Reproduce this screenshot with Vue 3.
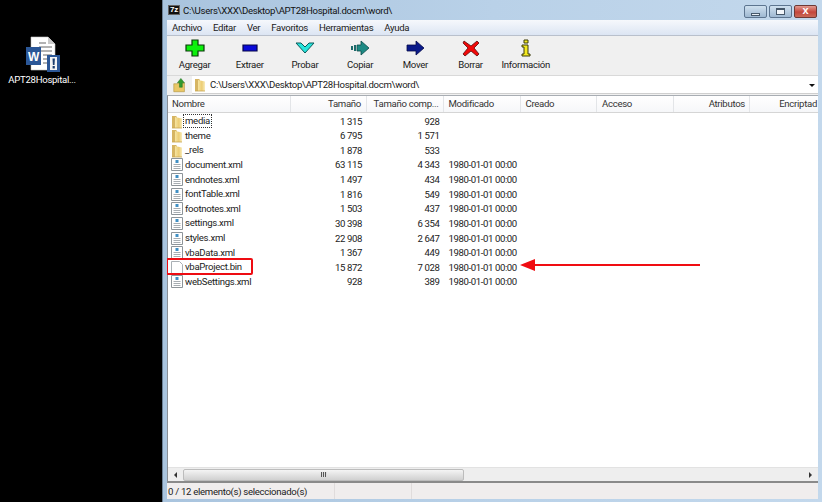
<template>
  <div class="screen">
    <!-- Desktop -->
    <div class="desktop">
      <div class="desk-icon">
        <svg width="36" height="36" viewBox="0 0 36 36">
          <path d="M6 1h17l7 7v26H6z" fill="#fff" stroke="#c4c4c4" stroke-width="0.6"/>
          <path d="M23 1l7 7h-7z" fill="#c9c9c9"/>
          <path d="M14 7h7M14 11h13M14 15h13M18 19h9M18 23h6M18 27h6" stroke="#9a9a9a" stroke-width="1.4"/>
          <rect x="1" y="11" width="15" height="18" fill="#2b5797"/>
          <text x="3" y="24.5" class="w-letter">W</text>
          <path d="M22 19h13v17H22z" fill="#2b5797"/>
          <path d="M25 21h7v13h-7z" fill="#f4f4f4"/>
          <path d="M27.5 22.5h2.4l-.4 6.5h-1.6zM27.6 30h2.2v2.4h-2.2z" fill="#1b3d6e"/>
        </svg>
        <span class="desk-label">APT28Hospital...</span>
      </div>
    </div>

    <!-- 7-Zip window -->
    <div class="window">
      <div class="titlebar">
        <span class="app-icon">7z</span>
        <span class="title">C:\Users\XXX\Desktop\APT28Hospital.docm\word\</span>
        <div class="win-btns">
          <span class="win-btn"><i class="min-glyph"></i></span>
          <span class="win-btn"><i class="max-glyph"></i></span>
          <span class="win-btn close"><b>x</b></span>
        </div>
      </div>

      <div class="client">
        <div class="menu">
          <span v-for="m in menus" :key="m">{{ m }}</span>
        </div>

        <div class="toolbar">
          <div v-for="t in tools" :key="t.label" class="tool">
            <svg width="20" height="18" viewBox="0 0 20 18" v-html="t.icon"></svg>
            <span>{{ t.label }}</span>
          </div>
        </div>

        <div class="addressbar">
          <div class="up-btn">
            <svg width="16" height="17" viewBox="0 0 18 18">
              <path d="M2 7h4l1-1h7v10H2z" fill="#e9c766" stroke="#a98a35" stroke-width="0.6"/>
              <path d="M10 1l4 5h-2.4v5H8.4V6H6z" fill="#2f9a2f" stroke="#1c6a1c" stroke-width="0.5"/>
            </svg>
          </div>
          <div class="address">
            <svg class="folder" width="12" height="15" viewBox="0 0 12 15">
              <use href="#folder-shape"/>
            </svg>
            <span>C:\Users\XXX\Desktop\APT28Hospital.docm\word\</span>
            <i class="combo-arrow"></i>
          </div>
        </div>

        <div class="list">
          <div class="head">
            <span v-for="c in columns" :key="c.label" class="hcell" :class="c.cls">{{ c.label }}</span>
          </div>

          <div class="rows">
            <div v-for="(f, i) in files" :key="f.name" class="row">
              <span class="cell c-name">
                <svg v-if="f.type === 'dir'" class="file-icon" width="12" height="15" viewBox="0 0 12 15">
                  <use href="#folder-shape"/>
                </svg>
                <svg v-else-if="f.type === 'xml'" class="file-icon" width="12" height="15" viewBox="0 0 12 15">
                  <path d="M.5 1.5h11v12H.5z" fill="#fff" stroke="#8d9499"/>
                  <path d="M2.5 7.5h7M2.5 9.5h7M2.5 11.5h7" stroke="#a7adb2"/>
                  <path d="M4.5 3h3v3h-3z" fill="#3f8fc4"/>
                </svg>
                <svg v-else class="file-icon" width="12" height="15" viewBox="0 0 12 15">
                  <path d="M.5 1.5h8l3 3v9H.5z" fill="#fff" stroke="#aab0b5"/>
                </svg>
                <span class="fname" :class="{ focused: i === 0 }">{{ f.name }}</span>
              </span>
              <span class="cell c-size num">{{ f.size }}</span>
              <span class="cell c-comp num">{{ f.comp }}</span>
              <span class="cell c-date num">{{ f.date }}</span>
              <template v-if="f.name === 'vbaProject.bin'">
                <i class="mark-box"></i>
                <svg class="mark-arrow" width="182" height="14" viewBox="0 0 182 14">
                  <path d="M181 6H16V1L1 7l15 6V8h165z" fill="#f00d12"/>
                </svg>
              </template>
            </div>
          </div>

          <div class="hscroll">
            <i class="arr left"></i>
            <div class="thumb"><em></em></div>
            <i class="arr right"></i>
          </div>
        </div>

        <div class="status">
          <span class="s1">0 / 12 elemento(s) seleccionado(s)</span>
          <span class="s2"></span>
          <span class="s3"></span>
        </div>
      </div>
    </div>

    <!-- shared folder shape -->
    <svg width="0" height="0" class="defs">
      <defs>
        <linearGradient id="fold" x1="0" y1="0" x2="1" y2="0">
          <stop offset="0" stop-color="#f7e5a2"/>
          <stop offset="0.55" stop-color="#eccd74"/>
          <stop offset="1" stop-color="#f8ecbc"/>
        </linearGradient>
        <g id="folder-shape">
          <path d="M1 2h4l1 1v11H1z" fill="#d6b563"/>
          <path d="M4 3l7 1.5V14H4z" fill="url(#fold)"/>
          <path d="M1 14h10" stroke="#c6a552" stroke-width="0.8"/>
        </g>
      </defs>
    </svg>
  </div>
</template>

<script setup>
const menus = ['Archivo', 'Editar', 'Ver', 'Favoritos', 'Herramientas', 'Ayuda']

const tools = [
  { label: 'Agregar', icon: '<path d="M7 1h6v5h6v6h-6v5H7v-5H1V6h6z" fill="#0cf00c" stroke="#0a3a0a" stroke-width="1.2"/>' },
  { label: 'Extraer', icon: '<path d="M3 6h14v6H3z" fill="#0a0ad8" stroke="#06064a" stroke-width="1.2"/>' },
  { label: 'Probar', icon: '<path d="M1 4h5l4 4 4-4h5l-9 10z" fill="#28e4dc" stroke="#0b5a5a" stroke-width="1"/>' },
  { label: 'Copiar', icon: '<path d="M1 7h2v4H1zM4 6h2v6H4z" fill="#1c6a6a"/><path d="M7 6h4V2l8 7-8 7v-4H7z" fill="#1d8a84" stroke="#0b4a4a" stroke-width="0.8"/>' },
  { label: 'Mover', icon: '<path d="M2 6h9V2l8 7-8 7v-4H2z" fill="#0a1a8a" stroke="#050a4a" stroke-width="0.8"/>' },
  { label: 'Borrar', icon: '<path d="M3 2l7 5 6-5 2 2-5 5 5 6-2 2-6-5-6 5-2-2 5-6-5-5z" fill="#f00808" stroke="#5a0a0a" stroke-width="0.8"/>' },
  { label: 'Información', icon: '<path d="M8 1h4v3H8zM6 6h6v9h2v2H6v-2h2V8H6z" fill="#f4ea20" stroke="#3a3a08" stroke-width="1"/>' },
]

const columns = [
  { label: 'Nombre', cls: 'c-name' },
  { label: 'Tamaño', cls: 'c-size' },
  { label: 'Tamaño comp...', cls: 'c-comp' },
  { label: 'Modificado', cls: 'c-date' },
  { label: 'Creado', cls: 'c-std' },
  { label: 'Acceso', cls: 'c-std' },
  { label: 'Atributos', cls: 'c-attr' },
  { label: 'Encriptad', cls: 'c-enc' },
]

const stamp = '1980-01-01 00:00'
const files = [
  { name: 'media', type: 'dir', size: '1 315', comp: '928', date: '' },
  { name: 'theme', type: 'dir', size: '6 795', comp: '1 571', date: '' },
  { name: '_rels', type: 'dir', size: '1 878', comp: '533', date: '' },
  { name: 'document.xml', type: 'xml', size: '63 115', comp: '4 343', date: stamp },
  { name: 'endnotes.xml', type: 'xml', size: '1 497', comp: '434', date: stamp },
  { name: 'fontTable.xml', type: 'xml', size: '1 816', comp: '549', date: stamp },
  { name: 'footnotes.xml', type: 'xml', size: '1 503', comp: '437', date: stamp },
  { name: 'settings.xml', type: 'xml', size: '30 398', comp: '6 354', date: stamp },
  { name: 'styles.xml', type: 'xml', size: '22 908', comp: '2 647', date: stamp },
  { name: 'vbaData.xml', type: 'xml', size: '1 367', comp: '449', date: stamp },
  { name: 'vbaProject.bin', type: 'bin', size: '15 872', comp: '7 028', date: stamp },
  { name: 'webSettings.xml', type: 'xml', size: '928', comp: '389', date: stamp },
]
</script>

<style>
html, body { margin: 0; background: #000; }
</style>

<style scoped>
.screen {
  width: 822px;
  height: 502px;
  display: flex;
  overflow: hidden;
  background: #000;
  font-family: Roboto, "Liberation Sans", sans-serif;
  font-size: 9.6px;
  letter-spacing: -0.3px;
  color: #1a1a1a;
}
.defs { position: absolute; }

.desktop { width: 162px; flex-shrink: 0; padding: 36px 0 0 8px; box-sizing: border-box; }
.desk-icon { width: 68px; display: flex; flex-direction: column; align-items: center; gap: 2px; }
.desk-icon svg { margin-left: 2px; }
.desk-label { color: #fff; white-space: nowrap; }
.w-letter { font: bold 12px "Liberation Sans", sans-serif; fill: #fff; }

.window {
  width: 660px;
  min-width: 0;
  box-sizing: border-box;
  display: flex;
  flex-direction: column;
  background: linear-gradient(90deg, #a9c4de, #b9d1e8 50%, #c3d8ec);
  padding: 0 4px 3px 4px;
  border-left: 1px solid #6c8196;
}
.titlebar { height: 20px; display: flex; align-items: center; flex-shrink: 0; }
.app-icon {
  width: 12px; height: 10px; box-sizing: border-box; background: #111; color: #fff; border: 1px solid #666;
  font: bold 8px/8px "Liberation Sans", sans-serif; text-align: center; margin: 0 3px 0 1px;
}
.title { color: #111; }
.win-btns { margin-left: auto; display: flex; gap: 2px; margin-top: 2px; margin-right: 1px; align-self: flex-start; padding-top: 3px; }
.win-btn {
  width: 23px; height: 13px; box-sizing: border-box; border: 1px solid #5d7590; border-radius: 2px;
  background: linear-gradient(#cfe0ef, #9fb9d2); display: flex; align-items: center; justify-content: center;
}
.win-btn.close { background: linear-gradient(#e29a90, #c4473c 55%, #c96a58); border-color: #6e3a36; }
.win-btn.close b { color: #fff; font: bold 11px/11px "Liberation Sans", sans-serif; margin-top: -2px; }
.min-glyph { width: 9px; height: 3px; margin-top: 5px; background: #e8eef4; border: 1px solid #46586a; box-sizing: border-box; }
.max-glyph { width: 9px; height: 7px; border: 1px solid #46586a; border-top-width: 2px; box-sizing: border-box; background: #f2f6fa; }

.client { flex: 1; min-width: 0; display: flex; flex-direction: column; min-height: 0; background: #f0f0f0; overflow: hidden; }
.menu {
  height: 15px; flex-shrink: 0; display: flex; gap: 11px; padding: 0 0 0 5px; align-items: center;
  background: linear-gradient(#f6f8fc, #dce5f3);
  border-bottom: 1px solid #b9c0cc;
}
.toolbar { height: 39px; flex-shrink: 0; display: flex; background: #f0f0f0; }
.tool { width: 55.2px; display: flex; flex-direction: column; align-items: center; padding-top: 3px; gap: 1px; }
.tool span { line-height: 13px; white-space: nowrap; }

.addressbar { height: 18px; flex-shrink: 0; display: flex; border-top: 1px solid #d9d9d9; background: #f0f0f0; }
.up-btn { width: 25px; display: flex; align-items: center; justify-content: center; }
.address {
  flex: 1; background: #fff; display: flex; align-items: center; gap: 4px; padding-left: 2px;
  border-bottom: 1px solid #cfcfcf; position: relative;
}
.combo-arrow {
  position: absolute; right: 3px; top: 8px; width: 0; height: 0;
  border-left: 3px solid transparent; border-right: 3px solid transparent; border-top: 3px solid #111;
}

.list {
  flex: 1; min-height: 0; display: flex; flex-direction: column; margin-top: 1px;
  background: #fff; border-left: 1px solid #8a8f96; border-top: 1px solid #a8adb3; border-bottom: 2px solid #8a8a8a;
}
.head {
  height: 16px; flex-shrink: 0; display: flex; background: linear-gradient(#fff, #f6f7f9);
  border-bottom: 1px solid #d5d5d5; overflow: hidden; color: #333;
}
.hcell { border-right: 1px solid #e3e5e8; box-sizing: border-box; line-height: 16px; white-space: nowrap; }
.c-name { width: 122.5px; padding-left: 4px; box-sizing: border-box; }
.c-size { width: 76.5px; text-align: right; padding-right: 5px; box-sizing: border-box; }
.c-comp { width: 76.5px; text-align: right; padding-right: 4px; box-sizing: border-box; }
.c-date { width: 77px; padding-left: 5px; box-sizing: border-box; }
.c-std { width: 76.5px; padding-left: 5px; }
.c-attr { width: 76.5px; text-align: right; padding-right: 4px; }
.c-enc { width: 68px; text-align: right; padding-right: 1px; border-right: 0; }

.rows { flex: 1; min-height: 0; padding-top: 0.7px; }
.row { height: 14.64px; display: flex; align-items: center; position: relative; white-space: nowrap; color: #222; }
.row .c-name { display: flex; align-items: center; gap: 0; padding-left: 3px; }
.num { letter-spacing: -0.4px; }
.file-icon { flex-shrink: 0; }
.fname { padding: 0 1px; line-height: 12px; border: 1px solid transparent; }
.fname.focused { border: 1px dotted #333; }

.mark-box {
  position: absolute; left: -2px; top: -2px; width: 87px; height: 17px; box-sizing: border-box;
  border: 2px solid #ee0c12; border-radius: 2px;
}
.mark-arrow { position: absolute; left: 351px; top: -2px; }

.hscroll {
  height: 13px; flex-shrink: 0; display: flex; align-items: center; background: #eeeeee;
  border-top: 1px solid #e2e2e2;
}
.arr { width: 15px; flex-shrink: 0; display: flex; justify-content: center; }
.arr.left::before {
  content: ""; border-top: 3px solid transparent; border-bottom: 3px solid transparent; border-right: 3px solid #333;
}
.arr.right { margin-left: auto; }
.arr.right::before {
  content: ""; border-top: 3px solid transparent; border-bottom: 3px solid transparent; border-left: 3px solid #333;
}
.thumb {
  width: 281px; height: 12px; display: flex; align-items: center; justify-content: center;
  background: linear-gradient(#f4f4f4, #d0d0d0); border: 1px solid #bcbcbc; box-sizing: border-box; border-radius: 2px;
}
.thumb em { width: 6px; height: 5px; background: repeating-linear-gradient(90deg, #555 0 1px, #ddd 1px 2px); }

.status { height: 16px; flex-shrink: 0; display: flex; background: #f0eded; line-height: 17px; }
.status span { box-sizing: border-box; border-right: 1px solid #e0dcdc; }
.s1 { width: 168px; padding-left: 1px; white-space: nowrap; }
.s2 { width: 77px; }
.s3 { flex: 1; border-right: 0 !important; }
</style>
